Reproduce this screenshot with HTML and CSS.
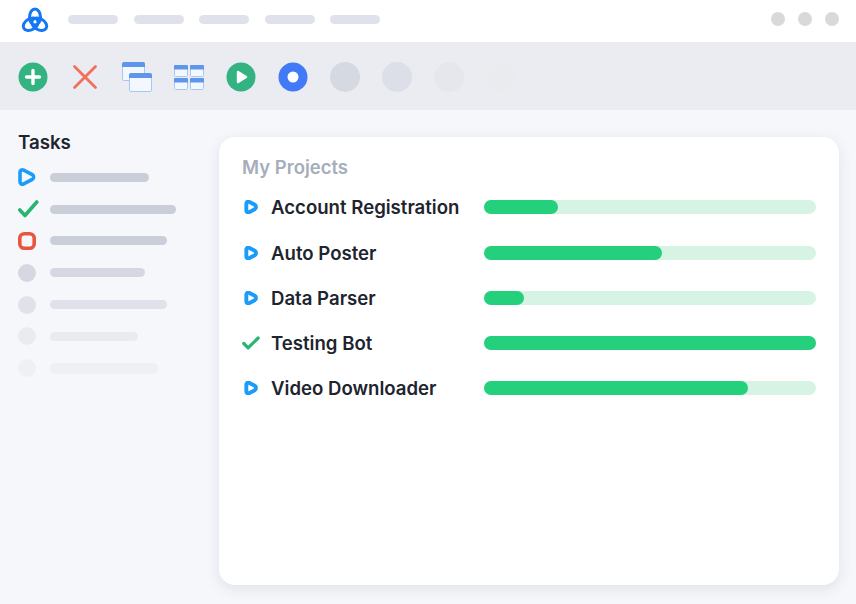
FILE: index.html
```html
<!DOCTYPE html>
<html lang="en">
<head>
    <meta charset="UTF-8">
    <title>My Projects</title>
    <link rel="stylesheet" href="styles.css">
</head>
<body>
    <header class="titlebar">
        <svg class="logo" width="30" height="28" viewBox="0 0 30 28" fill="none" stroke="#1478f5" stroke-width="3">
            <ellipse cx="15" cy="12" rx="5.500" ry="8"/>
            <ellipse cx="10.700" cy="19.300" rx="5.500" ry="8" transform="rotate(60 10.700 19.300)"/>
            <ellipse cx="19.300" cy="19.300" rx="5.500" ry="8" transform="rotate(-60 19.300 19.300)"/>
        </svg>
        <nav class="menu">
            <span class="menu-pill"></span>
            <span class="menu-pill"></span>
            <span class="menu-pill"></span>
            <span class="menu-pill"></span>
            <span class="menu-pill"></span>
        </nav>
        <div class="win-dots">
            <span class="win-dot"></span>
            <span class="win-dot"></span>
            <span class="win-dot"></span>
        </div>
    </header>

    <div class="toolbar">
        <svg class="tool" width="30" height="30" viewBox="0 0 30 30">
            <circle cx="15" cy="15" r="14.500" fill="#32b381"/>
            <path d="M15 8.500v13M8.500 15h13" stroke="#fff" stroke-width="3.400" stroke-linecap="round"/>
        </svg>
        <svg class="tool" width="30" height="30" viewBox="0 0 30 30">
            <path d="M4.500 4.500l21 21M25.500 4.500l-21 21" stroke="#f0705a" stroke-width="2.800" stroke-linecap="round"/>
        </svg>
        <svg class="tool" width="30" height="30" viewBox="0 0 30 30">
            <rect x="0.500" y="0.500" width="22" height="18" rx="1.500" fill="#f3f8ff" stroke="#a9c7f5"/>
            <path d="M0 2a2 2 0 0 1 2-2h19a2 2 0 0 1 2 2v3H0z" fill="#5f95ea"/>
            <rect x="7.500" y="11.500" width="22" height="18" rx="1.500" fill="#f3f8ff" stroke="#a9c7f5"/>
            <path d="M7 13a2 2 0 0 1 2-2h19a2 2 0 0 1 2 2v3H7z" fill="#5f95ea"/>
        </svg>
        <svg class="tool" width="30" height="30" viewBox="0 0 30 30">
            <g id="pane">
                <rect x="0.500" y="3.500" width="13" height="11" rx="1" fill="#f3f8ff" stroke="#a9c7f5"/>
                <path d="M0 4a1 1 0 0 1 1-1h12a1 1 0 0 1 1 1v3.500H0z" fill="#5f95ea"/>
            </g>
            <use href="#pane" x="16"/>
            <use href="#pane" y="13"/>
            <use href="#pane" x="16" y="13"/>
        </svg>
        <svg class="tool" width="30" height="30" viewBox="0 0 30 30">
            <circle cx="15" cy="15" r="14.500" fill="#32b381"/>
            <path d="M12 10l8 5-8 5z" fill="#fff" stroke="#fff" stroke-width="2.400" stroke-linejoin="round"/>
        </svg>
        <svg class="tool" width="30" height="30" viewBox="0 0 30 30">
            <circle cx="15" cy="15" r="14.500" fill="#4279f6"/>
            <circle cx="15" cy="15" r="5.500" fill="#fff"/>
        </svg>
        <span class="tool tool-off off-1"></span>
        <span class="tool tool-off off-2"></span>
        <span class="tool tool-off off-3"></span>
        <span class="tool tool-off off-4"></span>
    </div>

    <main class="content">
        <aside class="tasks">
            <h2 class="tasks-title">Tasks</h2>
            <ul class="task-list">
                <li class="task">
                    <svg class="task-icon" width="18" height="18" viewBox="0 0 18 18" fill="none">
                        <path d="M2 4.500c0-2.300 1.900-3.200 3.700-2.300l8.600 4.400c1.800 1 1.800 3.800 0 4.800l-8.600 4.400C3.900 16.700 2 15.800 2 13.500z" stroke="#1a9cf8" stroke-width="3.600" stroke-linejoin="round"/>
                    </svg>
                    <span class="task-bar w-99"></span>
                </li>
                <li class="task">
                    <svg class="task-icon" width="21" height="18" viewBox="0 0 21 18" fill="none">
                        <path d="M1.800 10l5.200 5.500L18.800 2" stroke="#27b56f" stroke-width="3.600" stroke-linecap="round" stroke-linejoin="round"/>
                    </svg>
                    <span class="task-bar w-126"></span>
                </li>
                <li class="task">
                    <svg class="task-icon" width="18" height="18" viewBox="0 0 18 18" fill="none">
                        <rect x="1.800" y="1.800" width="14.400" height="14.400" rx="4.500" stroke="#e9563f" stroke-width="3.600"/>
                    </svg>
                    <span class="task-bar w-117"></span>
                </li>
                <li class="task fade-1">
                    <span class="task-dot"></span>
                    <span class="task-bar w-95"></span>
                </li>
                <li class="task fade-2">
                    <span class="task-dot"></span>
                    <span class="task-bar w-117"></span>
                </li>
                <li class="task fade-3">
                    <span class="task-dot"></span>
                    <span class="task-bar w-88"></span>
                </li>
                <li class="task fade-4">
                    <span class="task-dot"></span>
                    <span class="task-bar w-108"></span>
                </li>
            </ul>
        </aside>

        <section class="card">
            <h2 class="card-title">My Projects</h2>
            <div class="project">
                <svg class="project-icon" width="14" height="14" viewBox="0 0 18 18" fill="none"><path d="M3 4.500c0-2 1.700-3 3.400-2.200l7.500 3.900c2 1 2 4.600 0 5.600l-7.500 3.900C4.700 16.500 3 15.500 3 13.500z" stroke="#1a9cf8" stroke-width="5" stroke-linejoin="round"/></svg>
                <span class="project-name">Account Registration</span>
                <div class="track"><div class="fill" style="width: 74px"></div></div>
            </div>
            <div class="project">
                <svg class="project-icon" width="14" height="14" viewBox="0 0 18 18" fill="none"><path d="M3 4.500c0-2 1.700-3 3.400-2.200l7.500 3.900c2 1 2 4.600 0 5.600l-7.500 3.900C4.700 16.500 3 15.500 3 13.500z" stroke="#1a9cf8" stroke-width="5" stroke-linejoin="round"/></svg>
                <span class="project-name">Auto Poster</span>
                <div class="track"><div class="fill" style="width: 178px"></div></div>
            </div>
            <div class="project">
                <svg class="project-icon" width="14" height="14" viewBox="0 0 18 18" fill="none"><path d="M3 4.500c0-2 1.700-3 3.400-2.200l7.500 3.900c2 1 2 4.600 0 5.600l-7.500 3.900C4.700 16.500 3 15.500 3 13.500z" stroke="#1a9cf8" stroke-width="5" stroke-linejoin="round"/></svg>
                <span class="project-name">Data Parser</span>
                <div class="track"><div class="fill" style="width: 40px"></div></div>
            </div>
            <div class="project">
                <svg class="project-icon check" width="18" height="14" viewBox="0 0 18 14" fill="none"><path d="M1.800 7.500l4.300 4.300L16.200 2" stroke="#27b56f" stroke-width="3.200" stroke-linecap="round" stroke-linejoin="round"/></svg>
                <span class="project-name">Testing Bot</span>
                <div class="track"><div class="fill" style="width: 332px"></div></div>
            </div>
            <div class="project">
                <svg class="project-icon" width="14" height="14" viewBox="0 0 18 18" fill="none"><path d="M3 4.500c0-2 1.700-3 3.400-2.200l7.500 3.900c2 1 2 4.600 0 5.600l-7.500 3.900C4.700 16.500 3 15.500 3 13.500z" stroke="#1a9cf8" stroke-width="5" stroke-linejoin="round"/></svg>
                <span class="project-name">Video Downloader</span>
                <div class="track"><div class="fill" style="width: 264px"></div></div>
            </div>
        </section>
    </main>
</body>
</html>
```

FILE: styles.css
```css
* {
    box-sizing: border-box;
}
body {
    margin: 0;
    width: 856px;
    height: 604px;
    overflow: hidden;
    background: #f6f7fb;
    font-family: Inter, "Liberation Sans", sans-serif;
    color: #1f2430;
}
.titlebar {
    height: 42px;
    background: #fff;
    display: flex;
    align-items: center;
    padding: 0 17px 4px 20px;
}
.logo {
    flex: none;
}
.menu {
    display: flex;
    gap: 15.500px;
    margin-left: 18px;
}
.menu-pill {
    width: 50px;
    height: 9px;
    border-radius: 5px;
    background: #dfe2ea;
}
.win-dots {
    display: flex;
    gap: 13px;
    margin-left: auto;
}
.win-dot {
    width: 14px;
    height: 14px;
    border-radius: 50%;
    background: #d9d9d9;
}
.toolbar {
    height: 68px;
    background: #ebecf2;
    display: flex;
    align-items: center;
    gap: 22px;
    padding: 2px 0 0 18px;
}
.tool {
    flex: none;
    display: block;
    width: 30px;
    height: 30px;
}
.tool-off {
    border-radius: 50%;
}
.off-1 { background: #d5d9e2; }
.off-2 { background: #dcdfe7; }
.off-3 { background: #e5e7ec; }
.off-4 { background: #eaebef; }
.content {
    display: flex;
    height: 494px;
    padding: 27px 17px 19px 18px;
}
.tasks {
    width: 201px;
    flex: none;
}
.tasks-title {
    margin: -5px 0 0;
    font-size: 18.700px;
    line-height: 22px;
    font-weight: 600;
    color: #20242e;
    padding-bottom: 14.400px;
}
.task-list {
    list-style: none;
    margin: 0;
    padding: 0;
    display: flex;
    flex-direction: column;
    gap: 13.800px;
}
.task {
    display: flex;
    align-items: center;
    height: 18px;
}
.task-icon {
    flex: none;
    margin-right: 14px;
}
.task-icon[width="21"] {
    margin-right: 11px;
}
.task-dot {
    flex: none;
    width: 18px;
    height: 18px;
    margin-right: 14px;
    border-radius: 50%;
    background: currentColor;
}
.task-bar {
    height: 9px;
    border-radius: 5px;
    background: #c9ced9;
}
.fade-1 { color: #d5d8e2; }
.fade-1 .task-bar { background: #d5d8e2; }
.fade-2 { color: #dfe2ea; }
.fade-2 .task-bar { background: #dfe2ea; }
.fade-3 { color: #eaebef; }
.fade-3 .task-bar { background: #eaebef; }
.fade-4 { color: #eff0f4; }
.fade-4 .task-bar { background: #eff0f4; height: 11px; }
.w-88 { width: 88px; }
.w-95 { width: 95px; }
.w-99 { width: 99px; }
.w-108 { width: 108px; }
.w-117 { width: 117px; }
.w-126 { width: 126px; }
.card {
    flex: 1;
    background: #fff;
    border-radius: 16px;
    box-shadow: 0 4px 14px rgba(60, 70, 100, 0.12);
    padding: 19px 23px 0 23px;
}
.card-title {
    margin: 0 0 6.800px;
    font-size: 18.500px;
    line-height: 22px;
    font-weight: 600;
    color: #a6adbb;
}
.project {
    display: flex;
    align-items: center;
    height: 45.150px;
}
.project-icon {
    flex: none;
    margin: 0 13px 0 2px;
}
.project-icon.check {
    margin: 0 11px 0 0;
}
.project-name {
    width: 213px;
    flex: none;
    font-size: 18.600px;
    font-weight: 600;
    color: #20242e;
    white-space: nowrap;
}
.track {
    width: 332px;
    height: 14px;
    border-radius: 7px;
    background: #d6f3e4;
}
.fill {
    height: 100%;
    border-radius: 7px;
    background: #25d07d;
}
```
